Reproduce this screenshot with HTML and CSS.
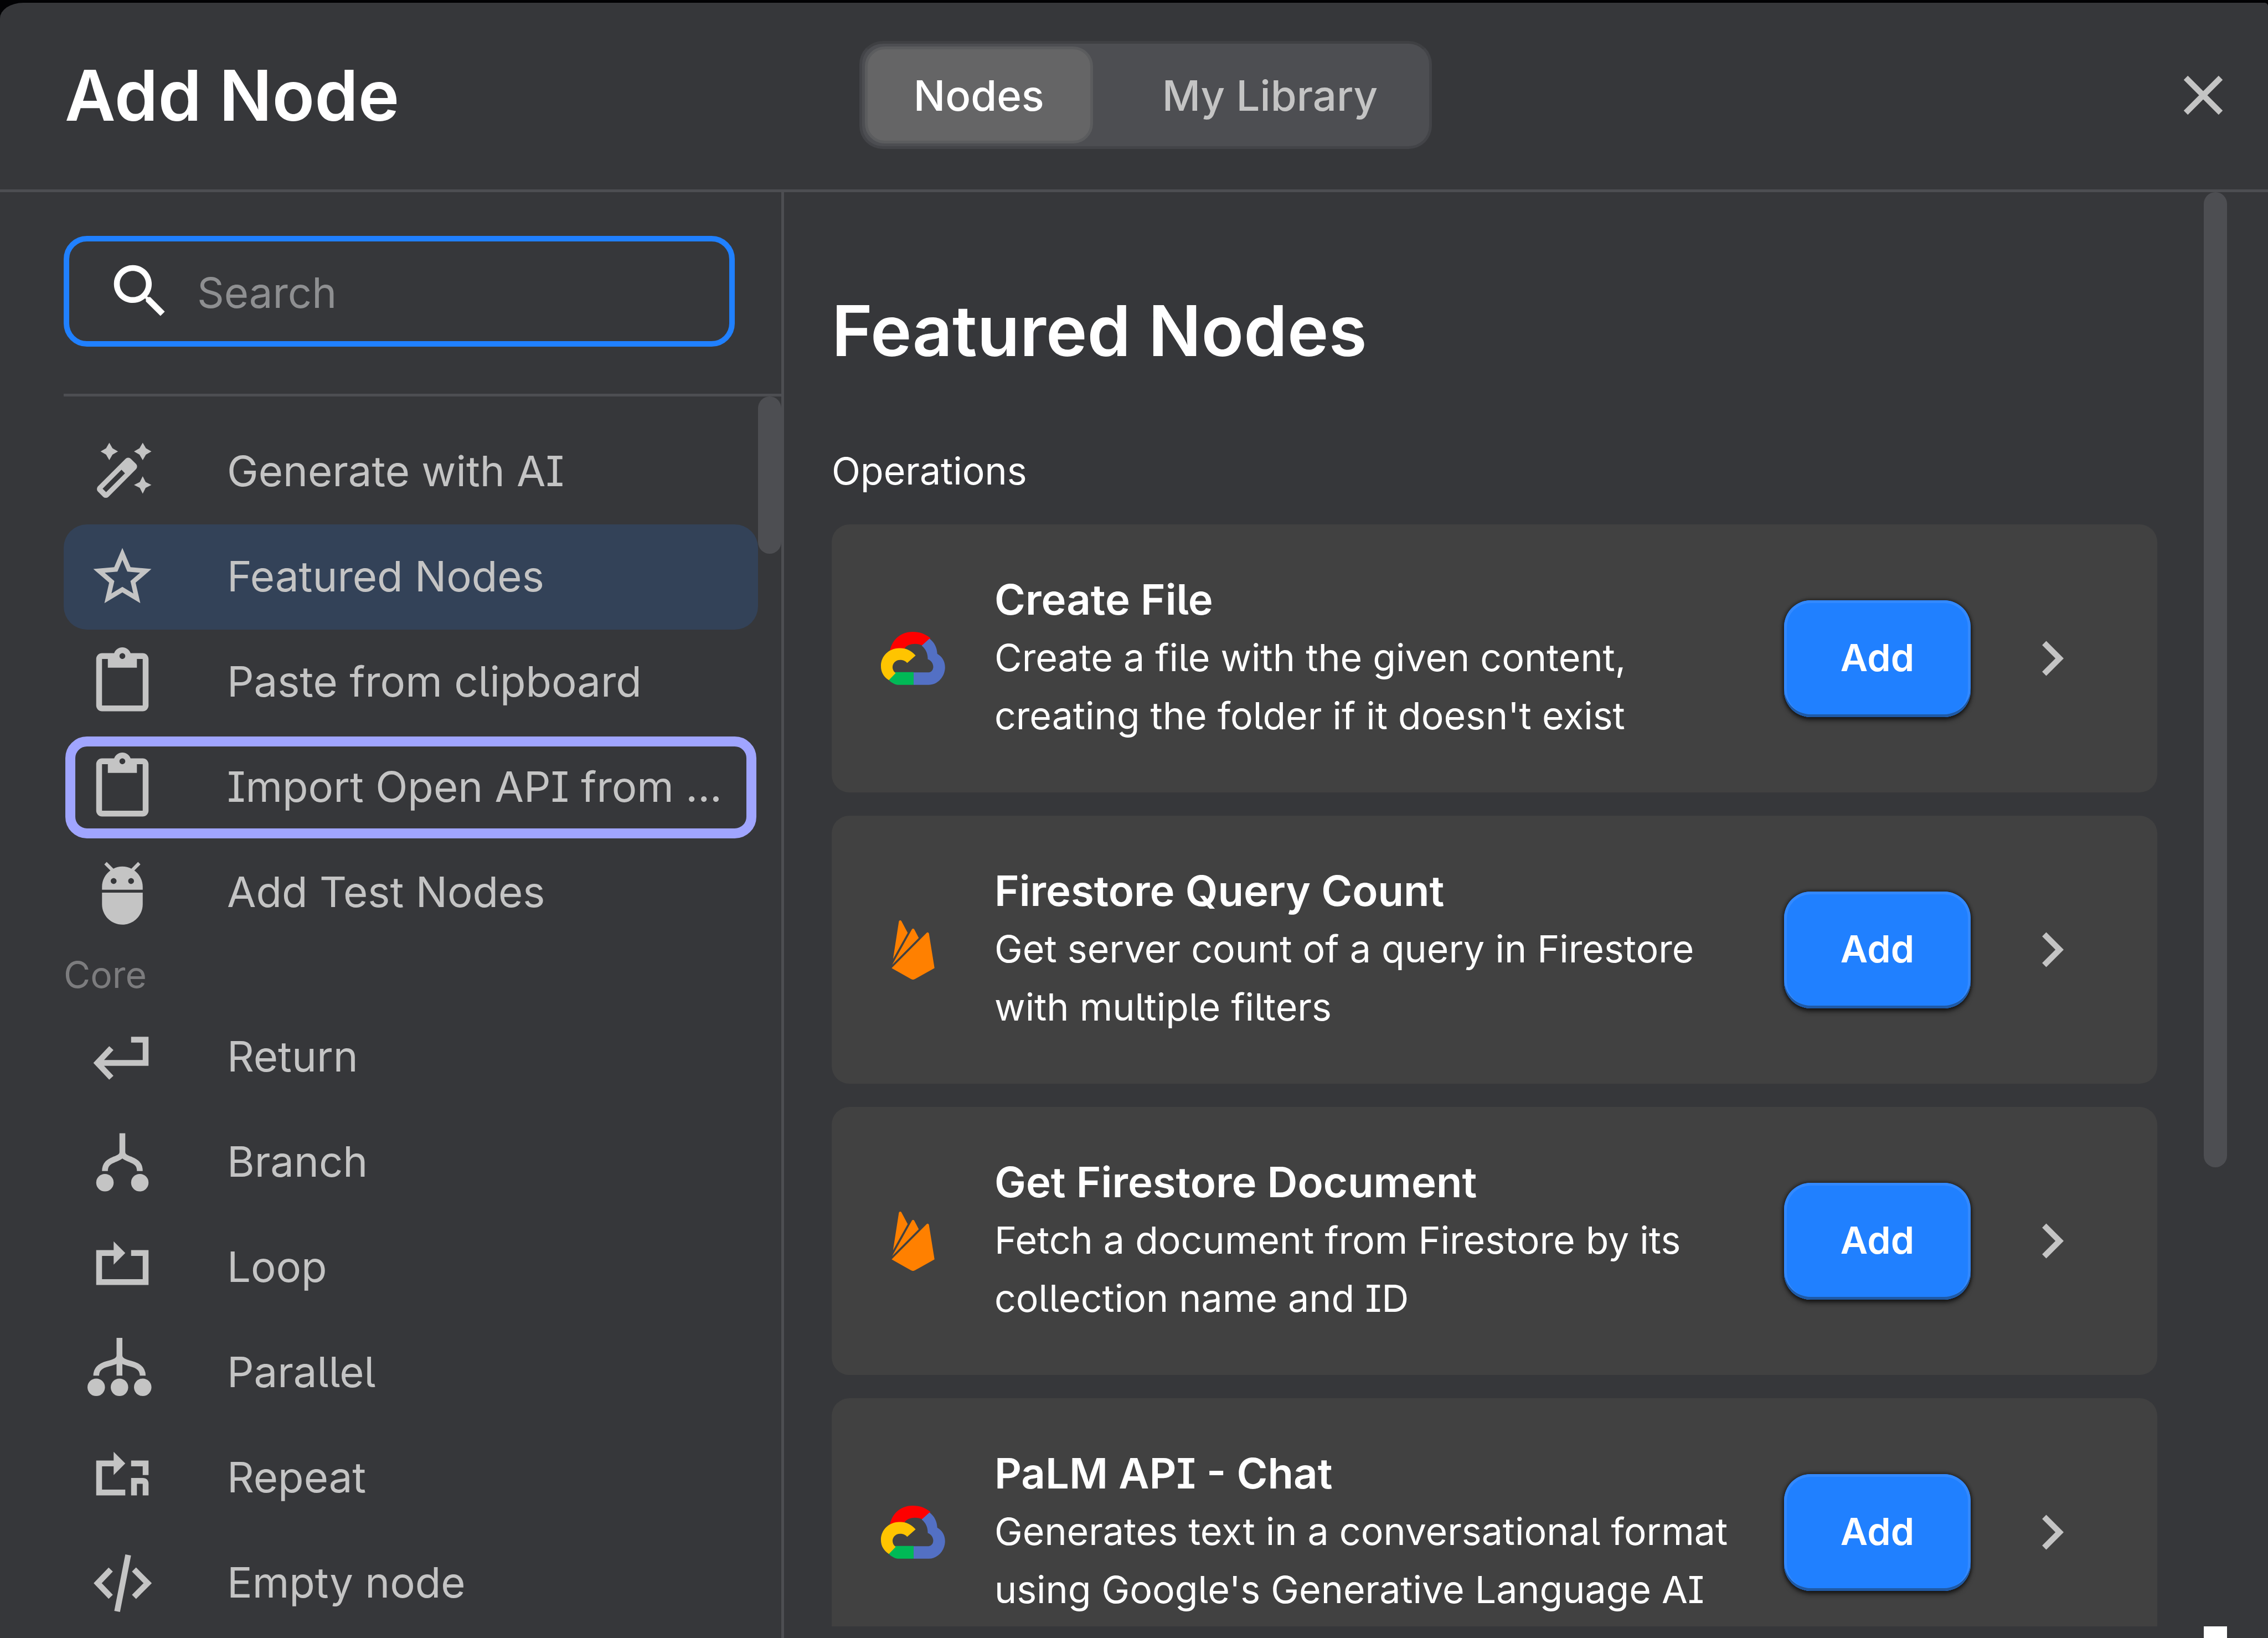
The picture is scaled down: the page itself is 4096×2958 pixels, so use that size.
FILE: index.html
```html
<!DOCTYPE html>
<html lang="en">
<head>
<meta charset="utf-8">
<title>Add Node</title>
<link rel="stylesheet" href="styles.css">
</head>
<body>
<svg class="sprite" aria-hidden="true">
  <symbol id="i-chevron" viewBox="0 0 24 24"><path d="M10 6 8.590 7.410 13.170 12l-4.580 4.590L10 18l6-6z"/></symbol>
  <symbol id="i-clipboard" viewBox="0 0 24 24"><path d="M19 2h-4.180C14.400.840 13.300 0 12 0c-1.300 0-2.400.840-2.820 2H5c-1.100 0-2 .900-2 2v16c0 1.100.900 2 2 2h14c1.100 0 2-.900 2-2V4c0-1.100-.900-2-2-2zm-7 0c.550 0 1 .450 1 1s-.450 1-1 1-1-.450-1-1 .450-1 1-1zm7 18H5V4h2v3h10V4h2v16z"/></symbol>
  <symbol id="i-cloud" viewBox="53 75 380 324">
    <path fill="#fe0000" d="M106 188C122 118 176 78 240 78c42 0 76 12 106 38l-42 46c-34-20-92-17-112 16l-40 4z"/>
    <path fill="#5370c4" d="M246 392v-74h89c17-2 29-16 27-38-2-18-14-34-32-40 0-35-12-60-36-80l46-42c30 24 44 52 46 90 28 16 46 42 46 80 0 54-42 104-97 104z"/>
    <path fill="#00b956" d="M138 316h108v76h-86c-24 0-44-12-60-28z"/>
    <path fill="#ffc400" d="M160 175c35-3 68 10 98 43l-50 44c-13-17-43-22-60-14-30 14-36 52-8 74l-40 42c-34-22-47-52-47-84 0-58 47-104 107-105z"/>
  </symbol>
  <symbol id="i-firebase" viewBox="0 0 24 24"><path fill="#ff8000" d="M3.890 15.672 6.255.461A.542.542 0 0 1 7.270.288l2.543 4.771zm16.794 3.692-2.250-14a.540.540 0 0 0-.919-.295L3.316 19.365l7.856 4.427a1.621 1.621 0 0 0 1.588 0zM14.300 7.147l-1.820-3.482a.542.542 0 0 0-.960 0L3.530 17.984z"/></symbol>
</svg>

<div class="dialog">
  <header class="header">
    <h1 class="header__title">Add Node</h1>
    <div class="tabs" role="tablist">
      <button class="tabs__tab tabs__tab--active" role="tab" aria-selected="true">Nodes</button>
      <button class="tabs__tab" role="tab" aria-selected="false">My Library</button>
    </div>
    <button class="close" aria-label="Close">
      <svg class="close__icon" viewBox="0 0 16 16"><path d="M2 2l12 12M14 2 2 14" fill="none" stroke="currentColor" stroke-width="2"/></svg>
    </button>
  </header>

  <div class="body">
    <aside class="sidebar">
      <label class="search">
        <svg class="icon" viewBox="0 0 24 24"><path d="M15.500 14h-.790l-.280-.270C15.410 12.590 16 11.110 16 9.500 16 5.910 13.090 3 9.500 3S3 5.910 3 9.500 5.910 16 9.500 16c1.610 0 3.090-.590 4.230-1.570l.270.280v.790l5 4.990L20.490 19l-4.990-5zm-6 0C7.010 14 5 11.990 5 9.500S7.010 5 9.500 5 14 7.010 14 9.500 11.990 14 9.500 14z"/></svg>
        <input class="search__input" type="text" placeholder="Search" aria-label="Search">
      </label>

      <div class="nav">
        <nav class="nav__list">
          <a class="nav__item" href="#generate">
            <svg class="icon" viewBox="0 0 24 24"><path d="M7.500 2l1.100 1.900 1.900 1.100-1.900 1.100L7.500 8l-1.100-1.900L4.500 5l1.900-1.100zM19 2l1.100 1.900L22 5l-1.900 1.100L19 8l-1.100-1.900L16 5l1.900-1.100zM19 13.500l1 2 2 1-2 1-1 2-1-2-2-1 2-1z"/><path fill-rule="evenodd" d="M13.100 7.500a1.300 1.300 0 0 1 1.800 0l1.800 1.800a1.300 1.300 0 0 1 0 1.800L7.200 20.600a1.300 1.300 0 0 1-1.800 0l-1.800-1.800a1.300 1.300 0 0 1 0-1.800zM11.700 11.300 5.200 17.800l1.200 1.200 6.500-6.500z"/></svg>
            <span class="nav__text">Generate with AI</span>
          </a>
          <a class="nav__item nav__item--active" href="#featured">
            <svg class="icon" viewBox="0 0 24 24"><path d="M22 9.240l-7.190-.620L12 2 9.190 8.630 2 9.240l5.460 4.730L5.820 21 12 17.270 18.180 21l-1.630-7.030L22 9.240zM12 15.400l-3.760 2.270 1-4.280-3.320-2.880 4.380-.380L12 6.100l1.710 4.040 4.380.380-3.320 2.880 1 4.280L12 15.400z"/></svg>
            <span class="nav__text">Featured Nodes</span>
          </a>
          <a class="nav__item" href="#paste">
            <svg class="icon"><use href="#i-clipboard"/></svg>
            <span class="nav__text">Paste from clipboard</span>
          </a>
          <a class="nav__item nav__item--focus" href="#import">
            <svg class="icon"><use href="#i-clipboard"/></svg>
            <span class="nav__text">Import Open API from ...</span>
          </a>
          <a class="nav__item" href="#test">
            <svg class="icon" viewBox="0 0 24 24"><path d="M5 16c0 3.870 3.130 7 7 7s7-3.130 7-7v-4H5v4zM16.120 4.370l2.100-2.100-.820-.830-2.300 2.310C14.160 3.280 13.120 3 12 3s-2.160.280-3.090.750L6.600 1.440l-.820.830 2.100 2.100C6.140 5.640 5 7.680 5 10v1h14v-1c0-2.320-1.140-4.360-2.880-5.630zM9 9c-.550 0-1-.450-1-1s.450-1 1-1 1 .450 1 1-.450 1-1 1zm6 0c-.550 0-1-.450-1-1s.450-1 1-1 1 .450 1 1-.450 1-1 1z"/></svg>
            <span class="nav__text">Add Test Nodes</span>
          </a>
          <h2 class="nav__group">Core</h2>
          <a class="nav__item" href="#return">
            <svg class="icon icon--line" viewBox="0 0 24 24"><path d="M15 6h5v8H3.500M8.200 8.900 3.400 14l4.800 5.100"/></svg>
            <span class="nav__text">Return</span>
          </a>
          <a class="nav__item" href="#branch">
            <svg class="icon icon--line" viewBox="0 0 24 24"><path d="M12 2v7.500M6 15c0-2.500 1.500-3.300 3-3.900S12 10 12 8.500c0 1.500 1.500 2 3 2.600s3 1.400 3 3.900"/><g class="icon__dot"><circle cx="6" cy="19" r="3"/><circle cx="18" cy="19" r="3"/></g></svg>
            <span class="nav__text">Branch</span>
          </a>
          <a class="nav__item" href="#loop">
            <svg class="icon icon--line" viewBox="0 0 24 24"><path d="M10 7H4v10h16V7h-5"/><path class="icon__dot" d="M9 3l4 4-4 4z"/></svg>
            <span class="nav__text">Loop</span>
          </a>
          <a class="nav__item" href="#parallel">
            <svg class="icon icon--line" viewBox="0 0 24 24"><path d="M11 0v13M3 13c0-2.500 1.700-3.500 4-4.100 2.300-.6 4-1.100 4-2.900 0 1.800 1.700 2.300 4 2.900 2.300.6 4 1.600 4 4.100"/><g class="icon__dot"><circle cx="3" cy="17" r="3"/><circle cx="11" cy="17" r="3"/><circle cx="19" cy="17" r="3"/></g></svg>
            <span class="nav__text">Parallel</span>
          </a>
          <a class="nav__item" href="#repeat">
            <svg class="icon icon--line" viewBox="0 0 24 24"><path d="M10 7H4v10h9M15 7h5v4M16 18v-6M16 13h3q1 0 1 1v4"/><path class="icon__dot" d="M9 3l4 4-4 4z"/></svg>
            <span class="nav__text">Repeat</span>
          </a>
          <a class="nav__item" href="#empty">
            <svg class="icon icon--line" viewBox="0 0 24 24"><path d="M8 7.300 3.500 12 8 16.700M16 7.300l4.700 4.700-4.700 4.700M14 2.300l-3.800 19.400"/></svg>
            <span class="nav__text">Empty node</span>
          </a>
        </nav>
        <div class="bar"><div class="bar__thumb bar__thumb--nav"></div></div>
      </div>
    </aside>

    <main class="main">
      <section class="content">
        <h2 class="content__title">Featured Nodes</h2>
        <h3 class="content__label">Operations</h3>
        <article class="card">
          <svg class="card__icon card__icon--cloud"><use href="#i-cloud"/></svg>
          <div class="card__text">
            <h4 class="card__title">Create File</h4>
            <p class="card__desc">Create a file with the given content, creating the folder if it doesn't exist</p>
          </div>
          <button class="add">Add</button>
          <button class="more" aria-label="Open Create File"><svg class="icon"><use href="#i-chevron"/></svg></button>
        </article>
        <article class="card">
          <svg class="card__icon"><use href="#i-firebase"/></svg>
          <div class="card__text">
            <h4 class="card__title">Firestore Query Count</h4>
            <p class="card__desc">Get server count of a query in Firestore with multiple filters</p>
          </div>
          <button class="add">Add</button>
          <button class="more" aria-label="Open Firestore Query Count"><svg class="icon"><use href="#i-chevron"/></svg></button>
        </article>
        <article class="card">
          <svg class="card__icon"><use href="#i-firebase"/></svg>
          <div class="card__text">
            <h4 class="card__title">Get Firestore Document</h4>
            <p class="card__desc">Fetch a document from Firestore by its collection name and ID</p>
          </div>
          <button class="add">Add</button>
          <button class="more" aria-label="Open Get Firestore Document"><svg class="icon"><use href="#i-chevron"/></svg></button>
        </article>
        <article class="card">
          <svg class="card__icon card__icon--cloud"><use href="#i-cloud"/></svg>
          <div class="card__text">
            <h4 class="card__title">PaLM API - Chat</h4>
            <p class="card__desc">Generates text in a conversational format using Google's Generative Language AI</p>
          </div>
          <button class="add">Add</button>
          <button class="more" aria-label="Open PaLM API - Chat"><svg class="icon"><use href="#i-chevron"/></svg></button>
        </article>
      </section>
      <div class="bar bar--main">
        <div class="bar__track"><div class="bar__thumb bar__thumb--main"></div></div>
        <div class="bar__corner"></div>
      </div>
    </main>
  </div>
</div>
</body>
</html>
```
FILE: styles.css
```css
* {
  box-sizing: border-box;
}

:root {
  --surface: #36373a;
  --line: #4d4e52;
  --text: #c4c4c4;
  --accent: #2080ff;
}

body {
  margin: 0;
  height: 100vh;
  padding-top: 5px;
  overflow: hidden;
  background: #020204;
  color: #fff;
  font-family: Inter, "Liberation Sans", sans-serif;
  font-feature-settings: "ss02", "cv05", "cv08";
}

h1, h2, h3, h4, p {
  margin: 0;
  font-weight: 400;
}

button, input {
  margin: 0;
  padding: 0;
  border: 0;
  background: none;
  color: inherit;
  font: inherit;
  font-feature-settings: inherit;
}

a {
  color: inherit;
  text-decoration: none;
}

.sprite {
  position: absolute;
  width: 0;
  height: 0;
}

.icon {
  flex: none;
  display: block;
  width: 126px;
  height: 126px;
  fill: currentColor;
}

.icon--line {
  fill: none;
  stroke: currentColor;
  stroke-width: 2;
}

.icon__dot {
  fill: currentColor;
  stroke: none;
}

.dialog {
  display: flex;
  flex-direction: column;
  height: 100%;
  background: var(--surface);
  border-radius: 42px 6px 0 0 / 28px 6px 0 0;
}

/* Header */

.header {
  flex: none;
  display: grid;
  grid-template-columns: 1fr auto 1fr;
  align-items: center;
  padding: 69px 75px 73px 117px;
  border-bottom: 5px solid var(--line);
}

.header__title {
  font-size: 126px;
  line-height: 168px;
  font-weight: 600;
}

.tabs {
  display: flex;
  padding: 5px;
  border: 5px solid #434448;
  border-top-color: #3f4043;
  border-radius: 42px;
  background: var(--line);
}

.tabs__tab {
  height: 175px;
  padding: 2px 83px 0;
  border: 5px solid transparent;
  border-radius: 36px;
  color: var(--text);
  font-size: 76px;
  line-height: 105px;
  font-weight: 500;
}

.tabs__tab--active {
  margin-right: 37px;
  background: #656566;
  border-color: #5b5c5e;
  color: #fff;
}

.close {
  justify-self: end;
  color: var(--text);
}

.close__icon {
  display: block;
  width: 84px;
  height: 84px;
}

.body {
  flex: 1;
  min-height: 0;
  display: flex;
}

/* Sidebar */

.sidebar {
  flex: none;
  width: 1416px;
  display: flex;
  flex-direction: column;
  padding: 79px 0 0 115px;
  border-right: 5px solid var(--line);
}

.search {
  flex: none;
  display: flex;
  align-items: center;
  gap: 40px;
  height: 200px;
  margin-right: 84px;
  padding: 0 65px;
  border: 10px solid var(--accent);
  border-radius: 42px;
}

.search__input {
  flex: 1;
  min-width: 0;
  padding-top: 5px;
  outline: 0;
  font-size: 76px;
  line-height: 105px;
}

.search__input::placeholder {
  color: #8e8f91;
  opacity: 1;
}

.nav {
  flex: 1;
  min-height: 0;
  display: flex;
  margin-top: 85px;
  border-top: 5px solid var(--line);
}

.nav__list {
  flex: 1;
  padding-top: 41px;
  overflow: hidden;
}

.nav__item {
  display: flex;
  align-items: center;
  gap: 126px;
  height: 190px;
  padding-left: 43px;
  border-radius: 42px;
  color: var(--text);
  font-size: 76px;
  line-height: 105px;
  white-space: nowrap;
}

.nav__text {
  padding-bottom: 3px;
}

.nav__item--active {
  background: #334258;
}

.nav__item--focus {
  outline: 18px solid #a0a5ff;
  outline-offset: -21px;
}

.nav__group {
  height: 107px;
  color: #7c7c7e;
  font-size: 66px;
  line-height: 107px;
}

/* Scroll bars */

.bar {
  flex: none;
  width: 42px;
}

.bar__thumb {
  border-radius: 21px;
  background: var(--line);
}

.bar__thumb--nav {
  height: 284px;
}

.bar--main {
  display: flex;
  flex-direction: column;
}

.bar__track {
  flex: 1;
}

.bar__thumb--main {
  height: 68%;
}

.bar__corner {
  height: 21px;
  background: #fff;
}

/* Node catalogue */

.main {
  flex: 1;
  min-width: 0;
  display: flex;
  gap: 84px;
  padding: 0 74px 0 86px;
}

.content {
  flex: 1;
  min-width: 0;
  display: flex;
  flex-direction: column;
  margin-bottom: 21px;
  padding-top: 166px;
  overflow: hidden;
}

.content__title {
  flex: none;
  font-size: 126px;
  line-height: 168px;
  font-weight: 600;
}

.content__label {
  flex: none;
  margin: 117px 0 44px;
  font-size: 68px;
  line-height: 105px;
}

.card {
  flex: none;
  display: flex;
  align-items: center;
  gap: 84px;
  height: 484px;
  margin-bottom: 42px;
  padding: 0 127px 0 84px;
  border-radius: 32px;
  background: #414141;
}

.card__icon {
  flex: none;
  width: 126px;
  height: 107px;
}

.card__icon--cloud {
  height: 99px;
}

.card__text {
  flex: 1;
  min-width: 0;
  padding-bottom: 4px;
}

.card__title {
  font-size: 76px;
  line-height: 105px;
  font-weight: 600;
}

.card__desc {
  font-size: 68px;
  line-height: 105px;
}

.add {
  width: 337px;
  height: 211px;
  padding-bottom: 4px;
  border-radius: 48px;
  background: var(--accent);
  box-shadow:
    inset 0 -5px 0 #1f5aa6,
    inset 0 0 0 5px #3389ff,
    0 0 5px 3px rgba(0, 0, 0, 0.35),
    0 6px 8px rgba(0, 0, 0, 0.5);
  font-size: 68px;
  line-height: 105px;
  font-weight: 600;
}

.more {
  color: var(--text);
}
```
